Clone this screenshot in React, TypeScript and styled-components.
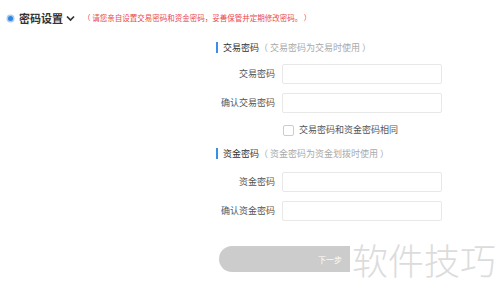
import React from "react";
import styled, { createGlobalStyle } from "styled-components";

const Global = createGlobalStyle`
  html, body { margin: 0; padding: 0; background: #fff; }
  body { font-family: "Noto Sans CJK SC", "Noto Sans", sans-serif; color: #333; }
`;

const Page = styled.div`
  position: relative;
  width: 500px;
  height: 299px;
  overflow: hidden;
  background: #fff;
`;

const Header = styled.div`
  display: flex;
  align-items: center;
  height: 36px;
  padding-left: 8px;
`;

const Dot = styled.span`
  width: 5px;
  height: 5px;
  border-radius: 50%;
  background: #2f86e0;
  box-shadow: 0 0 0 1.5px #a9cdf3;
  margin-right: 6px;
`;

const Title = styled.span`
  font-size: 11px;
  font-weight: 700;
  color: #333;
  line-height: 14px;
`;

const Chevron = styled.svg`
  margin-left: 3px;
  margin-right: 8px;
`;

const Notice = styled.span`
  font-size: 7.5px;
  color: #e84a4a;
  line-height: 10px;
`;

const Form = styled.div`
  margin-left: 216px;
  width: 226px;
  display: flex;
  flex-direction: column;
`;

const SectionTitle = styled.div<{ $top: number }>`
  display: flex;
  align-items: center;
  margin-top: ${(p) => p.$top}px;
  height: 11px;
  border-left: 2px solid #3a8ee6;
  padding-left: 5px;
  font-size: 9px;
  color: #333;
  line-height: 11px;
`;

const Hint = styled.span`
  color: #aaa;
`;

const Row = styled.div<{ $top: number }>`
  display: flex;
  align-items: center;
  height: 20px;
  margin-top: ${(p) => p.$top}px;
`;

const Label = styled.label`
  width: 59px;
  text-align: right;
  font-size: 9px;
  line-height: 12px;
  color: #555;
  margin-right: 7px;
`;

const Input = styled.div`
  width: 158px;
  height: 18px;
  border: 1px solid #e8e8e8;
  border-radius: 2px;
`;

const CheckRow = styled.div`
  display: flex;
  align-items: center;
  height: 12px;
  margin-top: 11px;
  margin-left: 67px;
  font-size: 9px;
  line-height: 12px;
  color: #555;
`;

const Box = styled.span`
  width: 9px;
  height: 9px;
  border: 1px solid #ccc;
  border-radius: 2px;
  margin-right: 5px;
`;

const Button = styled.div`
  margin-top: 25px;
  margin-left: 3px;
  width: 222px;
  height: 26px;
  border-radius: 13px;
  background: #cccccc;
  color: #fff;
  font-size: 8px;
  display: flex;
  align-items: center;
  justify-content: center;
`;

const Watermark = styled.div`
  position: absolute;
  left: 350px;
  top: 239px;
  background: #fff;
  color: #dcdcdc;
  font-size: 36px;
  line-height: 40px;
  padding-left: 2px;
  font-family: "Noto Sans CJK SC", sans-serif;
  font-weight: 300;
`;

export default function App() {
  return (
    <Page>
      <Global />
      <Header>
        <Dot />
        <Title>密码设置</Title>
        <Chevron width="9" height="7" viewBox="0 0 9 7">
          <path d="M1 1.5 L4.5 5 L8 1.5" stroke="#333" strokeWidth="1.7" fill="none" />
        </Chevron>
        <Notice>（ 请您亲自设置交易密码和资金密码，妥善保管并定期修改密码。 ）</Notice>
      </Header>
      <Form>
        <SectionTitle $top={6}>
          交易密码<Hint>（ 交易密码为交易时使用 ）</Hint>
        </SectionTitle>
        <Row $top={11}>
          <Label>交易密码</Label>
          <Input />
        </Row>
        <Row $top={9}>
          <Label>确认交易密码</Label>
          <Input />
        </Row>
        <CheckRow>
          <Box />
          交易密码和资金密码相同
        </CheckRow>
        <SectionTitle $top={12}>
          资金密码<Hint>（ 资金密码为资金划拨时使用 ）</Hint>
        </SectionTitle>
        <Row $top={13}>
          <Label>资金密码</Label>
          <Input />
        </Row>
        <Row $top={9}>
          <Label>确认资金密码</Label>
          <Input />
        </Row>
        <Button>下一步</Button>
      </Form>
      <Watermark>软件技巧</Watermark>
    </Page>
  );
}
